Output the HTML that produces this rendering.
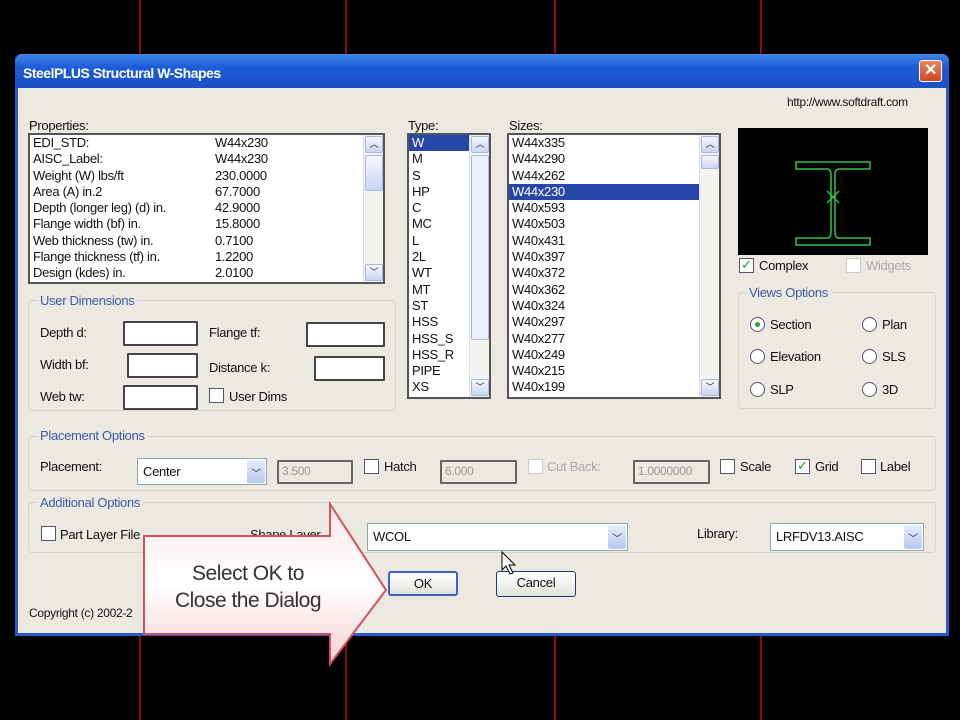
<!DOCTYPE html>
<html><head><style>
*{margin:0;padding:0;box-sizing:border-box}
body{width:960px;height:720px;background:#000;position:relative;overflow:hidden;font-family:"Liberation Sans",sans-serif;font-size:13px;color:#111;letter-spacing:-0.3px}
.a{position:absolute}
.vl{position:absolute;width:2px;background:#8a0d0d;top:0;height:720px}
#dlg{position:absolute;left:15px;top:54px;width:934px;height:582px;background:#ece9e0;border:3px solid #2a5cc8;border-top:none;border-radius:7px 7px 0 0}
#title{position:absolute;left:15px;top:54px;width:934px;height:34px;border-radius:7px 7px 0 0;background:linear-gradient(#3d84ea,#1d5bd6 40%,#1a50c4);color:#fff;font-weight:bold;font-size:14px;padding:11px 0 0 8px;letter-spacing:-0.5px}
.list{position:absolute;background:#fff;border:2px solid #555;overflow:hidden}
.row{height:16.3px;line-height:16px;padding-left:3px;white-space:nowrap}
.sel{background:#2747a8;color:#fff}
.sb{position:absolute;right:0;top:0;bottom:0;width:20px;background:#f3f3ef;border-left:1px solid #ddd}
.sbb{position:absolute;left:1px;width:18px;height:17px;background:linear-gradient(#f6f7ff,#c9d6f6);border:1px solid #aab8e0;border-radius:2px;font-size:9px;text-align:center;line-height:15px;color:#223}
.grp{position:absolute;border:1px solid #d6d3c8;border-radius:4px}
.gl{position:absolute;color:#3a5aa8;background:#ece9e0;padding:0 3px;font-size:13px}
.in{position:absolute;background:#fff;border:2px solid #444;border-radius:1px}
.dis{background:#ece9e0;color:#999;border:2px solid #666;font-size:12px;padding:2px 3px}
.cb{position:absolute;width:15px;height:15px;border:1px solid #556;background:#fff}
.rb{position:absolute;width:15px;height:15px;border:1px solid #556;background:#fff;border-radius:50%}
.combo{position:absolute;background:#fff;border:1px solid #8aa;padding:5px 0 0 5px}
.dd{position:absolute;right:1px;top:1px;bottom:1px;width:18px;background:linear-gradient(#e6edff,#b8c8ef);border-radius:2px;text-align:center;font-size:10px;padding-top:5px;color:#223}
.btn{position:absolute;background:linear-gradient(#fff,#e3e3dc);border:1px solid #1b3a7a;border-radius:3px;text-align:center;line-height:22px}
</style></head><body>
<div class="vl" style="left:139px"></div><div class="vl" style="left:345px"></div><div class="vl" style="left:554px"></div><div class="vl" style="left:760px"></div>
<div id="dlg"></div>
<div id="title">SteelPLUS Structural W-Shapes</div>
<div class="a" style="left:919px;top:60px;width:23px;height:22px;background:linear-gradient(#e9835e,#c94a22);border:1px solid #fff;border-radius:3px;color:#fff;font-weight:bold;text-align:center;line-height:20px;font-size:16px">✕</div>
<div class="a" style="left:787px;top:95px;font-size:12px">http://www.softdraft.com</div>

<div class="a" style="left:29px;top:118px">Properties:</div>
<div class="list" style="left:28px;top:133px;width:357px;height:151px">
<div style="position:absolute;left:0;top:0">
<div class="row">EDI_STD:</div><div class="row">AISC_Label:</div><div class="row">Weight (W) lbs/ft</div><div class="row">Area (A) in.2</div><div class="row">Depth (longer leg) (d) in.</div><div class="row">Flange width (bf) in.</div><div class="row">Web thickness (tw) in.</div><div class="row">Flange thickness (tf) in.</div><div class="row">Design (kdes) in.</div></div>
<div style="position:absolute;left:182px;top:0">
<div class="row">W44x230</div><div class="row">W44x230</div><div class="row">230.0000</div><div class="row">67.7000</div><div class="row">42.9000</div><div class="row">15.8000</div><div class="row">0.7100</div><div class="row">1.2200</div><div class="row">2.0100</div></div>
<div class="sb"><div class="sbb" style="top:1px">︿</div><div class="sbb" style="top:20px;height:36px"></div><div class="sbb" style="bottom:1px">﹀</div></div>
</div>

<div class="a" style="left:408px;top:118px">Type:</div>
<div class="list" style="left:407px;top:133px;width:84px;height:266px">
<div class="row sel" style="width:60px">W</div><div class="row">M</div><div class="row">S</div><div class="row">HP</div><div class="row">C</div><div class="row">MC</div><div class="row">L</div><div class="row">2L</div><div class="row">WT</div><div class="row">MT</div><div class="row">ST</div><div class="row">HSS</div><div class="row">HSS_S</div><div class="row">HSS_R</div><div class="row">PIPE</div><div class="row">XS</div>
<div class="sb"><div class="sbb" style="top:1px">︿</div><div class="sbb" style="top:20px;height:185px;background:#eef0f8"></div><div class="sbb" style="bottom:1px">﹀</div></div>
</div>

<div class="a" style="left:509px;top:118px">Sizes:</div>
<div class="list" style="left:507px;top:133px;width:214px;height:266px">
<div class="row">W44x335</div><div class="row">W44x290</div><div class="row">W44x262</div><div class="row sel" style="width:190px">W44x230</div><div class="row">W40x593</div><div class="row">W40x503</div><div class="row">W40x431</div><div class="row">W40x397</div><div class="row">W40x372</div><div class="row">W40x362</div><div class="row">W40x324</div><div class="row">W40x297</div><div class="row">W40x277</div><div class="row">W40x249</div><div class="row">W40x215</div><div class="row">W40x199</div>
<div class="sb"><div class="sbb" style="top:1px">︿</div><div class="sbb" style="top:20px;height:14px"></div><div class="sbb" style="bottom:1px">﹀</div></div>
</div>

<svg class="a" style="left:738px;top:128px" width="190" height="127"><rect width="190" height="127" fill="#000"/>
<g fill="none" stroke="#2fc24a" stroke-width="1.5"><path d="M58 34h74v7h-31q-4 0-4 6v57q0 6 4 6h31v7h-74v-7h31q4 0 4-6v-57q0-6-4-6h-31z"/><path d="M89 63l12 12M101 63l-12 12"/></g></svg>

<div class="cb" style="left:739px;top:258px"><span style="color:#1a9a2a;font-size:13px;position:absolute;left:1px;top:-2px">✓</span></div>
<div class="a" style="left:759px;top:258px">Complex</div>
<div class="cb" style="left:846px;top:258px;border-color:#ccc"></div>
<div class="a" style="left:866px;top:258px;color:#aaa">Widgets</div>

<div class="grp" style="left:738px;top:292px;width:198px;height:117px"></div>
<div class="gl" style="left:746px;top:285px">Views Options</div>
<div class="rb" style="left:750px;top:317px"><div style="position:absolute;left:4px;top:4px;width:5px;height:5px;border-radius:50%;background:#2a9a3a"></div></div><div class="a" style="left:770px;top:317px">Section</div>
<div class="rb" style="left:862px;top:317px"></div><div class="a" style="left:882px;top:317px">Plan</div>
<div class="rb" style="left:750px;top:349px"></div><div class="a" style="left:770px;top:349px">Elevation</div>
<div class="rb" style="left:862px;top:349px"></div><div class="a" style="left:882px;top:349px">SLS</div>
<div class="rb" style="left:750px;top:382px"></div><div class="a" style="left:770px;top:382px">SLP</div>
<div class="rb" style="left:862px;top:382px"></div><div class="a" style="left:882px;top:382px">3D</div>

<div class="grp" style="left:28px;top:300px;width:368px;height:111px"></div>
<div class="gl" style="left:37px;top:293px">User Dimensions</div>
<div class="a" style="left:40px;top:325px">Depth d:</div><div class="in" style="left:123px;top:321px;width:75px;height:25px"></div>
<div class="a" style="left:209px;top:325px">Flange tf:</div><div class="in" style="left:306px;top:322px;width:79px;height:25px"></div>
<div class="a" style="left:40px;top:357px">Width bf:</div><div class="in" style="left:127px;top:353px;width:71px;height:25px"></div>
<div class="a" style="left:209px;top:360px">Distance k:</div><div class="in" style="left:314px;top:356px;width:71px;height:25px"></div>
<div class="a" style="left:40px;top:389px">Web tw:</div><div class="in" style="left:123px;top:385px;width:75px;height:25px"></div>
<div class="cb" style="left:209px;top:388px"></div><div class="a" style="left:229px;top:389px">User Dims</div>

<div class="grp" style="left:28px;top:436px;width:908px;height:55px"></div>
<div class="gl" style="left:37px;top:428px">Placement Options</div>
<div class="a" style="left:40px;top:459px">Placement:</div>
<div class="combo" style="left:137px;top:458px;width:130px;height:27px">Center<div class="dd">﹀</div></div>
<div class="in dis" style="left:277px;top:460px;width:76px;height:24px">3.500</div>
<div class="cb" style="left:364px;top:459px"></div><div class="a" style="left:384px;top:459px">Hatch</div>
<div class="in dis" style="left:440px;top:460px;width:77px;height:24px">6.000</div>
<div class="cb" style="left:528px;top:459px;border-color:#ccc"></div><div class="a" style="left:547px;top:459px;color:#aaa">Cut Back:</div>
<div class="in dis" style="left:633px;top:460px;width:77px;height:24px">1.0000000</div>
<div class="cb" style="left:720px;top:459px"></div><div class="a" style="left:740px;top:459px">Scale</div>
<div class="cb" style="left:795px;top:459px"><span style="color:#1a9a2a;position:absolute;left:1px;top:-2px">✓</span></div><div class="a" style="left:815px;top:459px">Grid</div>
<div class="cb" style="left:861px;top:459px"></div><div class="a" style="left:880px;top:459px">Label</div>

<div class="grp" style="left:28px;top:502px;width:908px;height:51px"></div>
<div class="gl" style="left:37px;top:495px">Additional Options</div>
<div class="cb" style="left:41px;top:526px"></div><div class="a" style="left:60px;top:527px">Part Layer File</div>
<div class="a" style="left:250px;top:527px">Shape Layer</div>
<div class="combo" style="left:367px;top:523px;width:261px;height:28px">WCOL<div class="dd">﹀</div></div>
<div class="a" style="left:697px;top:526px">Library:</div>
<div class="combo" style="left:770px;top:523px;width:154px;height:28px">LRFDV13.AISC<div class="dd">﹀</div></div>

<div class="btn" style="left:388px;top:571px;width:70px;height:25px;border:2px solid #3a62c8">OK</div>
<div class="btn" style="left:496px;top:571px;width:80px;height:26px">Cancel</div>
<div class="a" style="left:29px;top:606px;font-size:12px">Copyright (c) 2002-2</div>

<svg class="a" style="left:140px;top:498px" width="250" height="172">
<defs><linearGradient id="g" x1="0" y1="0" x2="0" y2="1"><stop offset="0" stop-color="#fde8ea"/><stop offset="0.5" stop-color="#fff"/><stop offset="1" stop-color="#f6d0d4"/></linearGradient></defs>
<path d="M4 38H190V6L246 92L190 166V136H4Z" fill="url(#g)" stroke="#d0545e" stroke-width="2"/></svg>
<div class="a" style="left:148px;top:560px;width:200px;text-align:center;font-size:21px;line-height:27px;color:#333;letter-spacing:-0.5px">Select OK to<br>Close the Dialog</div>
<svg class="a" style="left:500px;top:550px" width="20" height="28"><path d="M2 2v18l4-4 4 8 3-1-4-8h6z" fill="#fff" stroke="#000"/></svg>
</body></html>
